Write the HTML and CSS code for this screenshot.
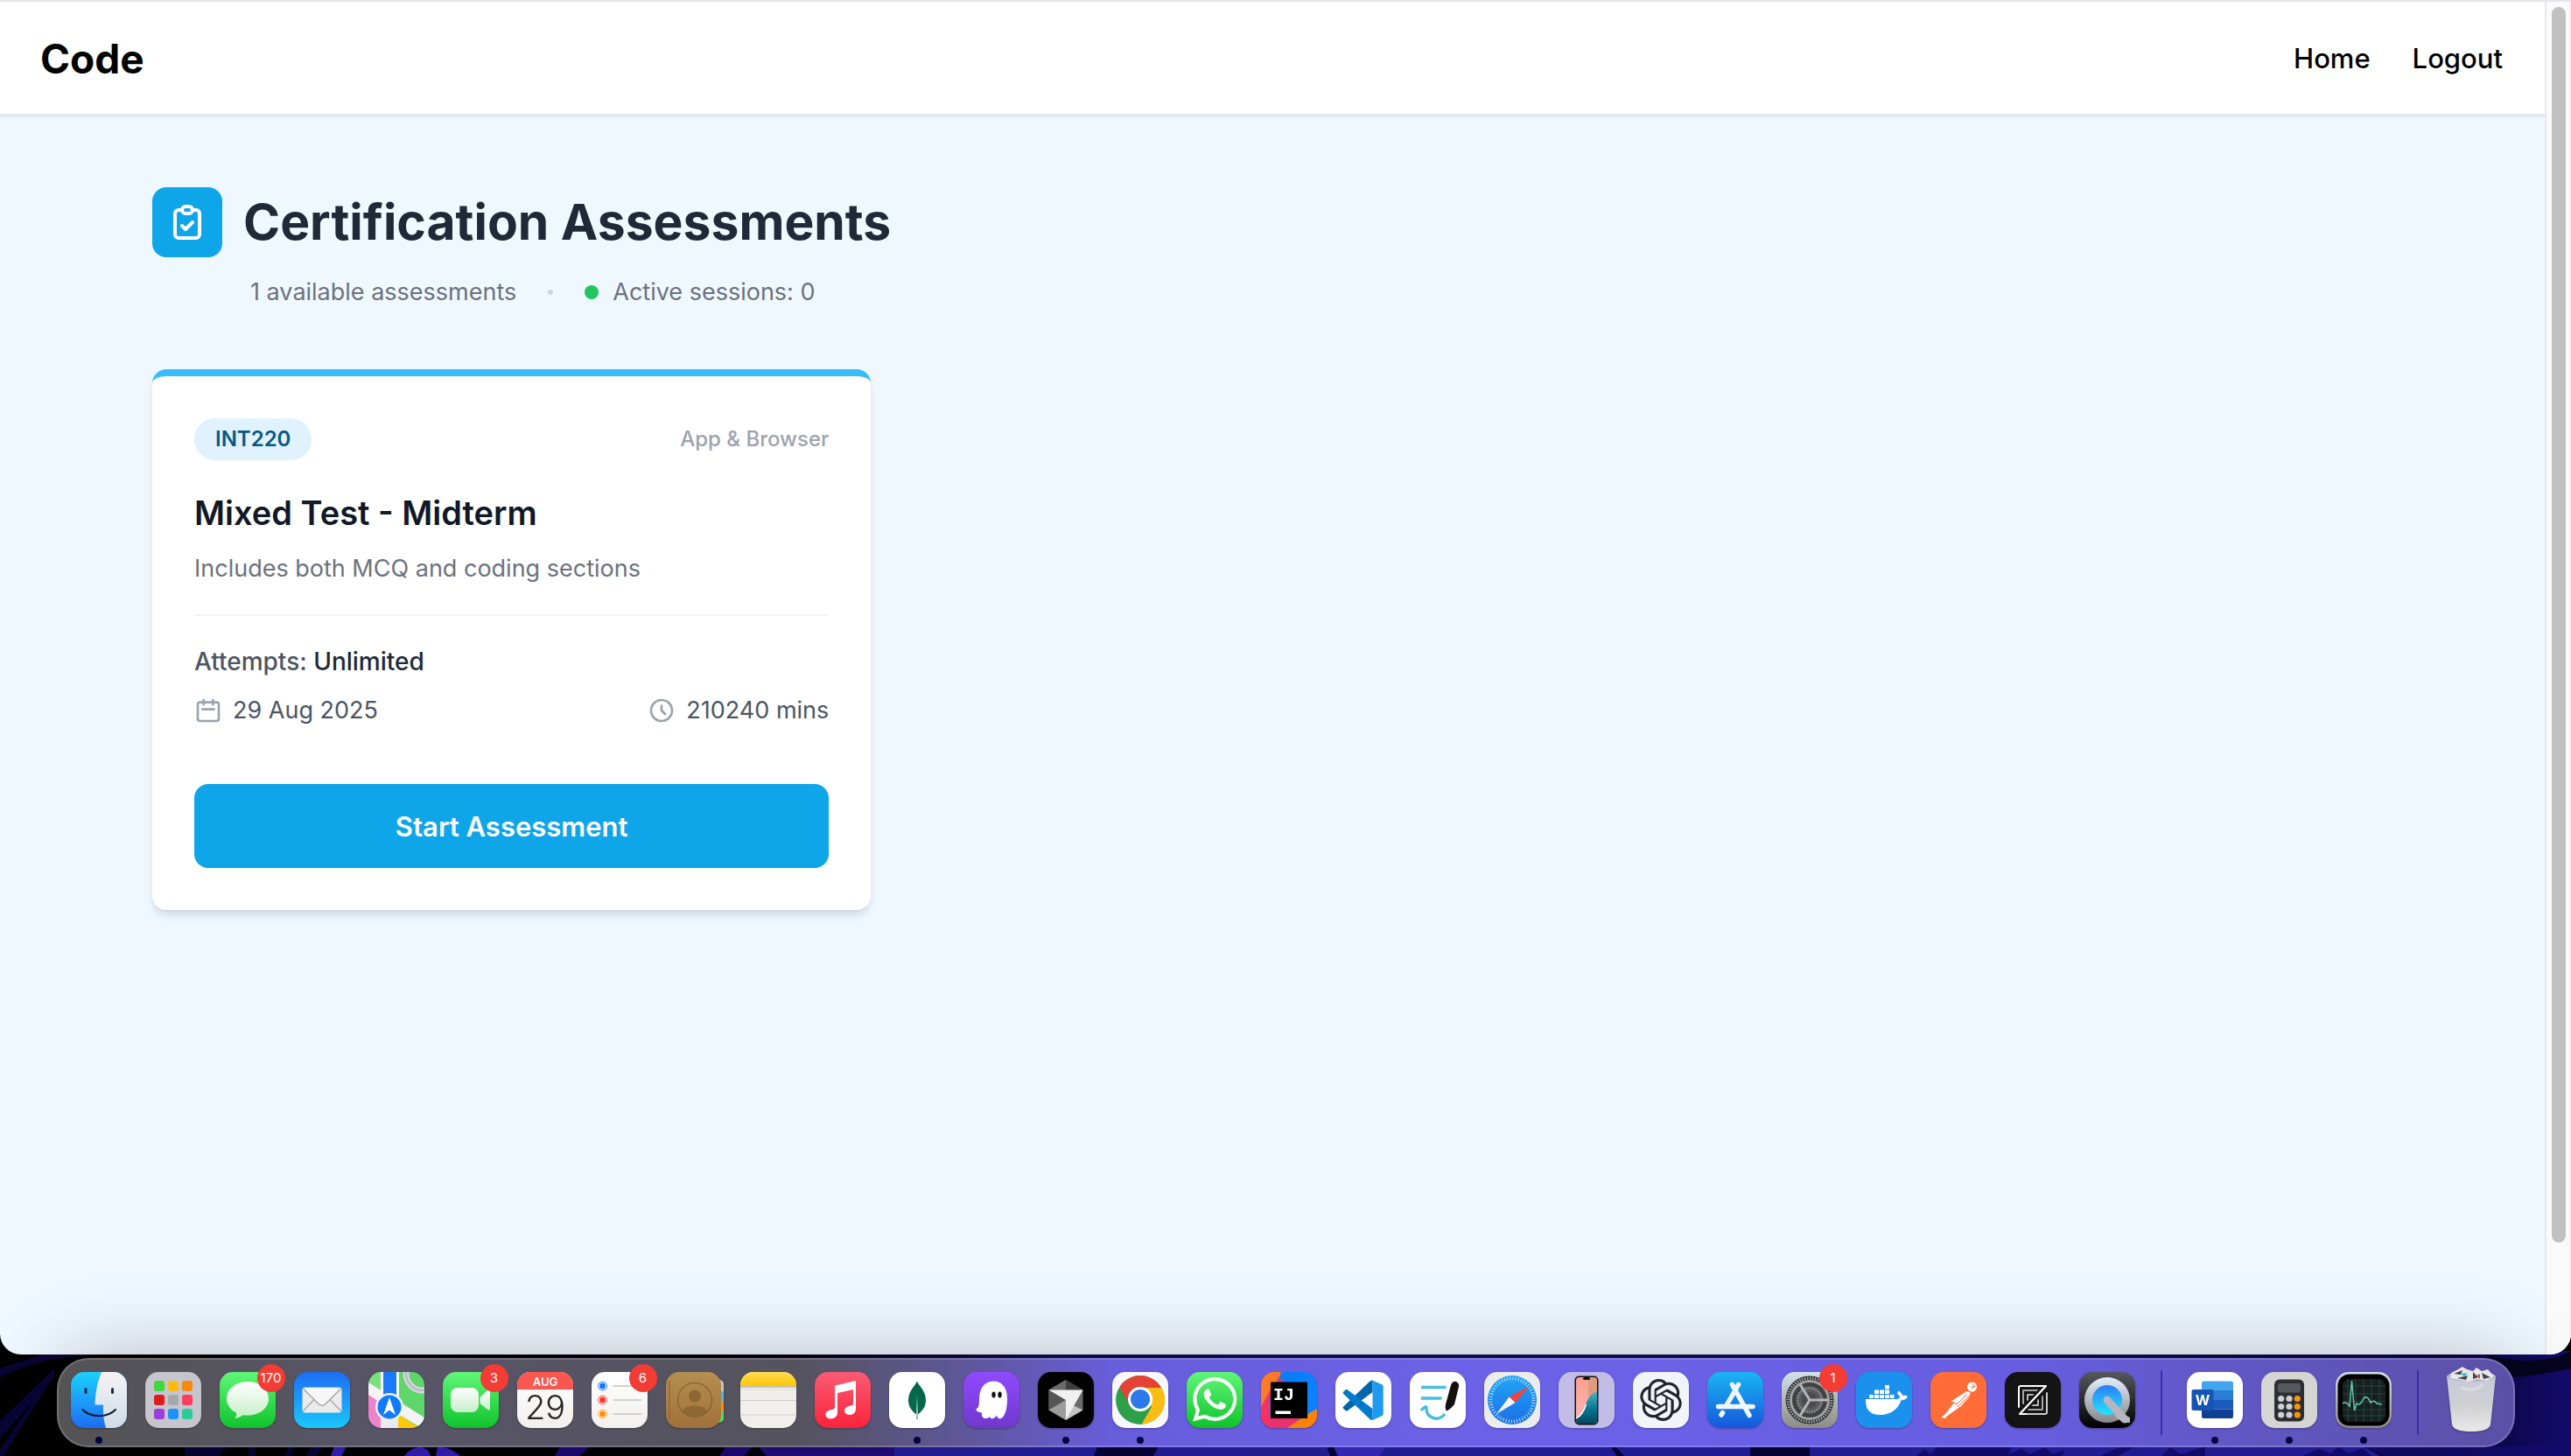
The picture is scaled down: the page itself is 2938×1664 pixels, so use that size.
FILE: index.html
```html
<!DOCTYPE html>
<html lang="en">
<head>
<meta charset="utf-8">
<title>Certification Assessments</title>
<link rel="stylesheet" href="styles.css">
</head>
<body>
<svg class="wallpaper" viewBox="0 0 2938 120" preserveAspectRatio="none" aria-hidden="true">
  <defs>
    <linearGradient id="wp" x1="0" x2="1" y1="0" y2="0">
      <stop offset="0" stop-color="#000"/><stop offset=".28" stop-color="#020008"/><stop offset=".4" stop-color="#100c4c"/><stop offset=".7" stop-color="#12104e"/><stop offset=".96" stop-color="#0c0744"/><stop offset="1" stop-color="#150b6e"/>
    </linearGradient>
  </defs>
  <rect width="2938" height="120" fill="url(#wp)"/>
  <path d="M0 30Q40 8 110 4H48L0 20ZM0 80L62 20V30L0 100ZM0 112L50 40H54L4 120H0Z" fill="#0b0536"/>
  <path d="M210 109H260L250 120H212ZM285 109H292V120H283ZM330 109H336L332 120H326ZM356 109H368L362 120H350Z" fill="#0a0538"/>
  <path d="M382 109H396L390 120H378ZM462 120Q470 109 482 110Q490 112 492 120ZM498 120L500 109Q514 110 526 120Z" fill="#3a1fc0"/>
  <path d="M640 109H674L662 120H634ZM830 109H860L850 120H822Z" fill="#200a78"/>
  <path d="M866 109H1300V120H876Z" fill="#220c80"/>
  <path d="M1022 109H2700L2720 120H1022Z" fill="#2720a6"/>
  <path d="M1254 109H1324L1318 120H1250ZM1516 109H1524L1528 120H1520ZM1840 109H1846L1856 120H1848ZM2000 109H2068V120H2000Z" fill="#08043c"/>
  <path d="M1524 109H1584L1576 120H1530Z" fill="#3c2cc8"/>
  <path d="M2190 120L2200 112L2206 118L2214 109H2300L2294 120ZM2290 120L2310 112L2320 118L2336 110L2346 118L2360 113L2356 120ZM2400 120L2424 109H2440L2420 120ZM2470 120L2480 110L2492 118L2520 109V120ZM2630 120L2650 112L2664 117L2672 109L2684 117L2700 111L2710 120Z" fill="#160c78"/>
  <path d="M2700 109H2938V120H2726Z" fill="#150b6e"/>
  <path d="M2840 4Q2900 20 2938 0V20Q2900 28 2872 30Z" fill="#07041f"/>
</svg>

<div class="window">
  <div class="page">
    <header class="topbar">
      <a class="brand" href="#">Code</a>
      <nav class="links">
        <a href="#">Home</a>
        <a href="#">Logout</a>
      </nav>
    </header>
    <main class="content">
      <div class="heading">
        <span class="heading-icon">
          <svg width="48" height="48" viewBox="0 0 24 24" fill="none" stroke="#fff" stroke-width="2" stroke-linecap="round" stroke-linejoin="round" aria-hidden="true"><path d="M9 5H7a2 2 0 00-2 2v12a2 2 0 002 2h10a2 2 0 002-2V7a2 2 0 00-2-2h-2M9 5a2 2 0 002 2h2a2 2 0 002-2M9 5a2 2 0 012-2h2a2 2 0 012 2m-6 9l2 2 4-4"/></svg>
        </span>
        <h1>Certification Assessments</h1>
      </div>
      <div class="summary">
        <span>1 available assessments</span>
        <span class="bullet"></span>
        <span class="sessions"><span class="status"></span>Active sessions: 0</span>
      </div>
      <div class="grid">
        <article class="card">
          <div class="card-top">
            <span class="code">INT220</span>
            <span class="platform">App &amp; Browser</span>
          </div>
          <h2>Mixed Test - Midterm</h2>
          <p class="desc">Includes both MCQ and coding sections</p>
          <div class="details">
            <p class="attempts">Attempts: <span>Unlimited</span></p>
            <div class="meta">
              <span class="meta-item">
                <svg width="32" height="32" viewBox="0 0 24 24" fill="none" stroke="#9ca3af" stroke-width="2" stroke-linecap="round" stroke-linejoin="round" aria-hidden="true"><path d="M8 7V3m8 4V3m-9 8h10M5 21h14a2 2 0 002-2V7a2 2 0 00-2-2H5a2 2 0 00-2 2v12a2 2 0 002 2z"/></svg>
                29 Aug 2025
              </span>
              <span class="meta-item">
                <svg width="32" height="32" viewBox="0 0 24 24" fill="none" stroke="#9ca3af" stroke-width="2" stroke-linecap="round" stroke-linejoin="round" aria-hidden="true"><path d="M12 8v4l3 3m6-3a9 9 0 11-18 0 9 9 0 0118 0z"/></svg>
                210240 mins
              </span>
            </div>
          </div>
          <button class="start" type="button">Start Assessment</button>
        </article>
      </div>
    </main>
  </div>
  <div class="scrollbar"><div class="thumb"></div></div>
</div>

<svg class="defs" width="0" height="0" aria-hidden="true">
  <defs>
    <linearGradient id="green" x2="0" y2="1"><stop stop-color="#5ff777"/><stop offset="1" stop-color="#0fc32c"/></linearGradient>
    <linearGradient id="white" x2="0" y2="1"><stop stop-color="#fff"/><stop offset="1" stop-color="#f1f0ec"/></linearGradient>
    <linearGradient id="soft" x2="0" y2="1"><stop stop-color="#fff"/><stop offset="1" stop-color="#c6eec9"/></linearGradient>
    <linearGradient id="finder" x2="0" y2="1"><stop stop-color="#1cd0fd"/><stop offset="1" stop-color="#1d6cf2"/></linearGradient>
    <linearGradient id="face" x2="0" y2="1"><stop stop-color="#f4f4f5"/><stop offset="1" stop-color="#cfdbe8"/></linearGradient>
    <linearGradient id="mail" x2="0" y2="1"><stop stop-color="#1d6df2"/><stop offset="1" stop-color="#1ac8fd"/></linearGradient>
    <linearGradient id="store" x2="0" y2="1"><stop stop-color="#19b5f3"/><stop offset="1" stop-color="#1558dc"/></linearGradient>
    <linearGradient id="music" x2="0" y2="1"><stop stop-color="#fb5b74"/><stop offset="1" stop-color="#fa233b"/></linearGradient>
    <linearGradient id="brown" x2="0" y2="1"><stop stop-color="#b58e50"/><stop offset="1" stop-color="#a1713c"/></linearGradient>
    <linearGradient id="yellow" x2="0" y2="1"><stop stop-color="#ffdc55"/><stop offset="1" stop-color="#ffc600"/></linearGradient>
    <linearGradient id="violet" x2="0" y2="1"><stop stop-color="#9049ff"/><stop offset="1" stop-color="#7038cc"/></linearGradient>
    <linearGradient id="compass" x2="0" y2="1"><stop stop-color="#1fa6f3"/><stop offset="1" stop-color="#1c6fe8"/></linearGradient>
    <linearGradient id="steel" x2="0" y2="1"><stop stop-color="#d2e2e9"/><stop offset="1" stop-color="#8d8b86"/></linearGradient>
    <linearGradient id="dark" x2="0" y2="1"><stop stop-color="#55585e"/><stop offset="1" stop-color="#000"/></linearGradient>
    <linearGradient id="silver" x2="0" y2="1"><stop stop-color="#e4edfa"/><stop offset="1" stop-color="#85868b"/></linearGradient>
    <linearGradient id="aqua" x2="0" y2="1"><stop stop-color="#2a7df5"/><stop offset="1" stop-color="#22e6ff"/></linearGradient>
    <linearGradient id="teal" x2="0" y2="1"><stop stop-color="#4fb6c4"/><stop offset=".5" stop-color="#087a96"/><stop offset="1" stop-color="#02435a"/></linearGradient>
    <linearGradient id="pink" x2="0" y2="1"><stop stop-color="#f9a18e"/><stop offset="1" stop-color="#ffb3b8"/></linearGradient>
    <linearGradient id="bin" x2="0" y2="1"><stop stop-color="#c9c8dc"/><stop offset=".5" stop-color="#cfcfd2"/><stop offset="1" stop-color="#e9e9ea"/></linearGradient>
    <linearGradient id="idea" x2="1" y2="1"><stop stop-color="#087cfa"/><stop offset="1" stop-color="#0a84ff"/></linearGradient>
    <clipPath id="tile"><rect width="64" height="64" rx="15"/></clipPath>
    <clipPath id="screen"><rect x="20" y="6" width="24" height="53" rx="4"/></clipPath>
    <clipPath id="ball"><circle cx="32" cy="32" r="28"/></clipPath>
  </defs>
</svg>

<nav class="dock" aria-label="Dock">
  <button class="app running" aria-label="Finder"><svg viewBox="0 0 64 64"><g clip-path="url(#tile)"><rect width="64" height="64" fill="url(#finder)"/><path d="M35 0C30 12 28 24 27.500 37.500H37C36.500 47 37.500 56 40 64H64V0Z" fill="url(#face)"/></g><path d="M17 19.500v4M47.500 19.500v4" stroke="#1b2a40" stroke-width="3" stroke-linecap="round"/><path d="M13.500 43C22 52.500 42 52.500 51 43" fill="none" stroke="#111c2c" stroke-width="2" stroke-linecap="round"/></svg></button>
  <button class="app" aria-label="Launchpad"><svg viewBox="0 0 64 64"><rect width="64" height="64" rx="15" fill="#c6c5ce"/><g><rect x="10" y="10" width="12" height="12" rx="3" fill="#3fd83c"/><rect x="26" y="10" width="12" height="12" rx="3" fill="#fdb913"/><rect x="42" y="10" width="12" height="12" rx="3" fill="#f58a12"/><rect x="10" y="26" width="12" height="12" rx="3" fill="#df1c1c"/><rect x="26" y="26" width="12" height="12" rx="3" fill="#a3a9ab"/><rect x="42" y="26" width="12" height="12" rx="3" fill="#fc3d5c"/><rect x="10" y="42" width="12" height="12" rx="3" fill="#9c3ddc"/><rect x="26" y="42" width="12" height="12" rx="3" fill="#1d92fa"/><rect x="42" y="42" width="12" height="12" rx="3" fill="#2cc99b"/></g></svg></button>
  <button class="app" aria-label="Messages"><svg viewBox="0 0 64 64"><rect width="64" height="64" rx="15" fill="url(#green)"/><path d="M32 11C18.500 11 8 19.500 8 30.500C8 37.500 12.500 43.500 19 46.500C20 49 18.500 51.500 17 53C21 53 24.500 51 26.500 49.300C44 51.500 56 42 56 30.500C56 19.500 45.500 11 32 11Z" fill="url(#soft)"/></svg><span class="badge">170</span></button>
  <button class="app" aria-label="Mail"><svg viewBox="0 0 64 64"><rect width="64" height="64" rx="15" fill="url(#mail)"/><rect x="9.500" y="17.500" width="45" height="29" rx="3" fill="#ebebec"/><path d="M10 45L23.500 31M54 45L40.500 31" stroke="#a5a7a9" stroke-width="1.300"/><path d="M10.500 19L28 36.500Q32 40 36 36.500L53.500 19" fill="#f7f7f8" stroke="#a0a2a4" stroke-width="1.300"/></svg></button>
  <button class="app" aria-label="Maps"><svg viewBox="0 0 64 64"><g clip-path="url(#tile)"><rect width="64" height="64" fill="#5fd66b"/><path d="M0 0H17V20H12L0 12Z" fill="#7ae07c"/><path d="M0 12L64 52V66L0 28Z" fill="#f3f3f5"/><path d="M0 26L15 36V64H0Z" fill="#ee82cb"/><path d="M14 32H34V64H14Z" fill="#e9e9ee"/><path d="M34 48L58 64H34Z" fill="#ffc907"/><rect x="14" width="21" height="34" fill="#fff"/><rect x="17" width="15" height="32" fill="#1a7bfa"/><circle cx="62" cy="2" r="19" fill="none" stroke="#d5d6dd" stroke-width="7"/><circle cx="62" cy="2" r="19" fill="none" stroke="#b3b6c2" stroke-width="2"/></g><circle cx="24" cy="40" r="16" fill="#eef2f8"/><circle cx="24" cy="40" r="13.500" fill="#0f7bfa"/><path d="M24 29L31 49L24 43.500L17 49Z" fill="#fff"/></svg></button>
  <button class="app" aria-label="FaceTime"><svg viewBox="0 0 64 64"><rect width="64" height="64" rx="15" fill="url(#green)"/><rect x="9" y="18" width="32" height="28" rx="8" fill="url(#soft)"/><path d="M42.500 29L50 22Q54 19 54 23V41Q54 46 50 42L42.500 36Z" fill="url(#soft)"/></svg><span class="badge">3</span></button>
  <button class="app" aria-label="Calendar"><svg viewBox="0 0 64 64"><g clip-path="url(#tile)"><rect width="64" height="64" fill="url(#white)"/><rect width="64" height="20" fill="#fb5750"/></g><text x="32" y="15.500" text-anchor="middle" font-family="Inter" font-weight="600" font-size="13" fill="#fff">AUG</text><text x="32" y="54" text-anchor="middle" font-family="Inter" font-weight="300" font-size="38" fill="#262626">29</text></svg></button>
  <button class="app" aria-label="Reminders"><svg viewBox="0 0 64 64"><rect width="64" height="64" rx="15" fill="url(#white)"/><path d="M24.500 16H57M24.500 32H57M24.500 48H57" stroke="#c2c3c8" stroke-width="1.500"/><g stroke="#fff" stroke-width="1.200"><circle cx="12.500" cy="16" r="6" fill="#1276f8"/><circle cx="12.500" cy="32" r="6" fill="#f9372d"/><circle cx="12.500" cy="48" r="6" fill="#f98f05"/><g fill="none"><circle cx="12.500" cy="16" r="4"/><circle cx="12.500" cy="32" r="4"/><circle cx="12.500" cy="48" r="4"/></g></g></svg><span class="badge">6</span></button>
  <button class="app" aria-label="Contacts"><svg viewBox="0 0 64 64"><path d="M58 8Q66 9 66 14V22H58Z" fill="#c5c5c2"/><path d="M58 22H66V34H58Z" fill="#4fb9e8"/><path d="M58 34H66V45H58Z" fill="#f99108"/><path d="M58 45H66V54Q65 58 58 58Z" fill="#53da5d"/><rect width="63" height="64" rx="15" fill="url(#brown)"/><path d="M4 10V54" stroke="#95693a" stroke-width="1.500"/><circle cx="33" cy="32" r="19.500" fill="none" stroke="#8d6633" stroke-width="1.500"/><circle cx="33" cy="27.500" r="7" fill="#8d6633"/><path d="M18.500 45Q22 38.500 33 38.500T47.500 45Q42 51.500 33 51.500T18.500 45Z" fill="#8d6633"/></svg></button>
  <button class="app" aria-label="Notes"><svg viewBox="0 0 64 64"><g clip-path="url(#tile)"><rect width="64" height="64" fill="#f0efeb"/><rect width="64" height="16" fill="url(#yellow)"/><path d="M0 17H64" stroke="#b9b5a8" stroke-width="1.500"/><path d="M2 20H64" stroke="#b5b3ad" stroke-dasharray="1 1.500"/><path d="M0 32.500H64M0 49H64" stroke="#cfcecb" stroke-width="1.200"/></g></svg></button>
  <button class="app" aria-label="Music"><svg viewBox="0 0 64 64"><rect width="64" height="64" rx="15" fill="url(#music)"/><path d="M23 15.500L47 10V42C47 46 44.500 49 40 49C36 49 34 46.500 34 44.500C34 41.500 36 39.500 40 38.800C43 38.300 44 38 44 35.500V20L26 24V46.500C26 50.500 22.500 53.500 18.500 53.500C14.500 53.500 12.500 51 12.500 48.800C12.500 45.500 15 44 18.500 43.200C22 42.500 23 42 23 39.500Z" fill="#fff"/></svg></button>
  <button class="app running" aria-label="MongoDB Compass"><svg viewBox="0 0 64 64"><rect width="64" height="64" rx="15" fill="#fff"/><path d="M32 10.500C34 16 42 21 42 32.500C42 40.500 37 45 33 48.500L32.700 54H31.300L31 48.500C27 45 22 40.500 22 32.500C22 21 30 16 32 10.500Z" fill="#05684a"/><path d="M32 26L33 48.500L32.500 54H31.500L31 48.500Z" fill="#b9cfc4"/></svg></button>
  <button class="app" aria-label="Phantom"><svg viewBox="0 0 64 64"><rect width="64" height="64" rx="15" fill="url(#violet)"/><path d="M34 10.500C44 10.500 50 18 50 30C50 38 49 46 46 50C43 55 39 54 37.500 49.500C36 54 31 54.500 30 51C27 54.500 20 54 21 46.500C18 46 14 45 14.500 42C17.500 41.500 18 37 18 31C18 19 24 10.500 34 10.500Z" fill="#fff"/><ellipse cx="34.500" cy="26" rx="2.200" ry="3.600" fill="#111"/><ellipse cx="41.500" cy="26" rx="2.200" ry="3.600" fill="#111"/></svg></button>
  <button class="app running" aria-label="Cursor"><svg viewBox="0 0 64 64"><rect width="64" height="64" rx="15" fill="#020202"/><path d="M32 9L51.500 20.500V43.500L32 55L12.500 43.500V20.500Z" fill="#6a6a6a"/><path d="M32 9L12.500 20.500H32Z" fill="#6b6b6b"/><path d="M32 9L51.500 20.500H32Z" fill="#3d3d3d"/><path d="M12.500 20.500L32 32L12.500 43.500Z" fill="#555"/><path d="M12.500 43.500L32 32V55Z" fill="#9d9d9d"/><path d="M51.500 43.500L32 55L40 38Z" fill="#c4c4c4"/><path d="M12.500 20.500H51.500L32 55V32Z" fill="#f0f0f0"/></svg></button>
  <button class="app running" aria-label="Chrome"><svg viewBox="0 0 64 64"><rect width="64" height="64" rx="15" fill="#f8f8ff"/><g clip-path="url(#ball)"><rect width="64" height="64" fill="#2c9f49"/><path d="M32 18H64V64H31L45 40Z" fill="#fcbd12"/><path d="M7 15V0H64V18H32L20 38Z" fill="#e54236"/></g><circle cx="32" cy="31" r="14" fill="#fff"/><circle cx="32" cy="31" r="11" fill="#2b78ea"/></svg></button>
  <button class="app" aria-label="WhatsApp"><svg viewBox="0 0 64 64"><rect width="64" height="64" rx="15" fill="url(#green)"/><path transform="translate(7 6) scale(2.100)" fill="#f5f8f5" d="M17.472 14.382c-.297-.149-1.758-.867-2.030-.967-.273-.099-.471-.148-.67.15-.197.297-.767.966-.94 1.164-.173.199-.347.223-.644.075-.297-.15-1.255-.463-2.390-1.475-.883-.788-1.480-1.761-1.653-2.059-.173-.297-.018-.458.13-.606.134-.133.298-.347.446-.52.149-.174.198-.298.298-.497.099-.198.05-.371-.025-.52-.075-.149-.669-1.612-.916-2.207-.242-.579-.487-.5-.669-.51-.173-.008-.371-.01-.57-.01-.198 0-.52.074-.792.372-.272.297-1.040 1.016-1.040 2.479 0 1.462 1.065 2.875 1.213 3.074.149.198 2.096 3.200 5.077 4.487.709.306 1.262.489 1.694.625.712.227 1.360.195 1.871.118.571-.085 1.758-.719 2.006-1.413.248-.694.248-1.289.173-1.413-.074-.124-.272-.198-.57-.347m-5.421 7.403h-.004a9.870 9.870 0 01-5.031-1.378l-.361-.214-3.741.982.998-3.648-.235-.374a9.860 9.860 0 01-1.510-5.260c.001-5.450 4.436-9.884 9.888-9.884 2.640 0 5.122 1.030 6.988 2.898a9.825 9.825 0 012.893 6.994c-.003 5.450-4.437 9.884-9.885 9.884m8.413-18.297A11.815 11.815 0 0012.050 0C5.495 0 .16 5.335.157 11.892c0 2.096.547 4.142 1.588 5.945L.057 24l6.305-1.654a11.882 11.882 0 005.683 1.448h.005c6.554 0 11.890-5.335 11.893-11.893a11.821 11.821 0 00-3.480-8.413Z"/></svg></button>
  <button class="app" aria-label="IntelliJ IDEA"><svg viewBox="0 0 64 64"><g clip-path="url(#tile)"><rect width="64" height="64" fill="#fe2857"/><path d="M0 0H23L10 38L0 42Z" fill="#fc7a28"/><path d="M0 40L12 18V64H0Z" fill="#fb3060"/><path d="M23 0H64V48L40 64H30L12 40Z" fill="url(#idea)"/><path d="M20 6L40 20L30 64H8V30Z" fill="#b14a90"/><path d="M8 50H46L36 64H6Z" fill="#e8316d"/><path d="M64 42V64H30L50 50Z" fill="#fe8205"/></g><rect x="11" y="11.500" width="42" height="41.500" fill="#000"/><text x="14" y="31.500" font-family="Liberation Mono" font-weight="700" font-size="20" fill="#fff">IJ</text><rect x="16.500" y="44.500" width="17.500" height="3.500" fill="#fff"/></svg></button>
  <button class="app" aria-label="Visual Studio Code"><svg viewBox="0 0 64 64"><rect width="64" height="64" rx="15" fill="#fff"/><path d="M13.500 44.500Q12.500 45 11.500 44L9.200 42Q8 40.800 9.200 39.500L39 11Q40.500 9.500 42.500 9.500V23Z" fill="#0065a9"/><path d="M13.500 20Q12.500 19.500 11.500 20.500L9.200 22.500Q8 23.700 9.200 25L39 53.500Q40.500 55 42.500 55V42Z" fill="#007acc"/><path d="M42.500 9.500L53 14.300Q54.700 15 54.700 17V47.500Q54.700 49.500 53 50.200L42.500 55Q41 55.300 39.500 54C41.500 55 42.500 53.500 42.500 52V12.500C42.500 11 41.500 9.500 39.500 10.500Q41 9 42.500 9.500Z" fill="#209af0"/></svg></button>
  <button class="app" aria-label="Notes Writer"><svg viewBox="0 0 64 64"><rect width="64" height="64" rx="15" fill="#fff"/><path d="M13 17.500H41.500M13 30H36.500" stroke="#45bfdd" stroke-width="3.500"/><path d="M13 44C16 40 19.500 38 19 42C18.500 52 33 58 40 48" fill="none" stroke="#45bfdd" stroke-width="3.500"/><path d="M47 15Q49 10 53 11Q57 13 56 17L51 37Q46 43 42 44.500Q40 42 41 37Z" fill="#15100f"/></svg></button>
  <button class="app" aria-label="Safari"><svg viewBox="0 0 64 64"><rect width="64" height="64" rx="15" fill="#ececee"/><circle cx="32" cy="32" r="28" fill="url(#compass)"/><circle cx="32" cy="32" r="24.500" fill="none" stroke="#b9defa" stroke-width="4" stroke-dasharray="1 2.200"/><path d="M51.500 16L35.500 35L28.500 28.500Z" fill="#f9413c"/><path d="M14 48L35.500 35L28.500 28.500Z" fill="#f4f5f7"/></svg></button>
  <button class="app" aria-label="iPhone Mirroring"><svg viewBox="0 0 64 64"><rect width="64" height="64" rx="15" fill="#c2bde6"/><rect x="18.500" y="4.500" width="27" height="56" rx="5" fill="#101216"/><g clip-path="url(#screen)"><rect x="20" y="6" width="24" height="53" fill="url(#pink)"/><path d="M44 6V24Q36 28 34 34V6Z" fill="#dd9c80"/><path d="M44 22Q34 26 31 38Q28 50 20 53V60H44Z" fill="url(#teal)"/><path d="M31.500 37Q28 49 20 53" fill="none" stroke="#fff" stroke-width="1.500"/></g><rect x="28" y="6" width="8" height="3" rx="1.500" fill="#101216"/></svg></button>
  <button class="app" aria-label="ChatGPT"><svg viewBox="0 0 64 64"><rect width="64" height="64" rx="15" fill="#f1f4f9"/><path transform="translate(8 8) scale(2)" fill="#20242b" d="M22.282 9.821a5.985 5.985 0 0 0-.516-4.911 6.046 6.046 0 0 0-6.510-2.900A6.065 6.065 0 0 0 4.981 4.182a5.985 5.985 0 0 0-3.998 2.900 6.046 6.046 0 0 0 .743 7.097 5.980 5.980 0 0 0 .511 4.911 6.051 6.051 0 0 0 6.515 2.900A5.985 5.985 0 0 0 13.260 24a6.056 6.056 0 0 0 5.772-4.206 5.989 5.989 0 0 0 3.998-2.900 6.056 6.056 0 0 0-.748-7.073zm-9.022 12.608a4.476 4.476 0 0 1-2.876-1.041l.142-.080 4.778-2.758a.795.795 0 0 0 .393-.681v-6.737l2.020 1.169a.071.071 0 0 1 .038.052v5.583a4.504 4.504 0 0 1-4.495 4.494zm-9.661-4.125a4.471 4.471 0 0 1-.535-3.014l.142.085 4.783 2.758a.771.771 0 0 0 .781 0l5.843-3.369v2.332a.080.080 0 0 1-.033.062L9.740 19.950a4.499 4.499 0 0 1-6.141-1.646zM2.341 7.896a4.485 4.485 0 0 1 2.366-1.973V11.600a.766.766 0 0 0 .388.677l5.814 3.354-2.020 1.169a.076.076 0 0 1-.071 0l-4.830-2.787A4.504 4.504 0 0 1 2.341 7.872zm16.596 3.856L13.104 8.364 15.119 7.200a.076.076 0 0 1 .071 0l4.830 2.791a4.494 4.494 0 0 1-.677 8.104v-5.677a.790.790 0 0 0-.407-.667zm2.011-3.023l-.142-.085-4.774-2.782a.776.776 0 0 0-.785 0L9.409 9.230V6.897a.066.066 0 0 1 .028-.062l4.830-2.787a4.499 4.499 0 0 1 6.680 4.660zM8.307 12.863l-2.020-1.164a.080.080 0 0 1-.038-.057V6.074a4.499 4.499 0 0 1 7.376-3.454l-.142.081L8.704 5.459a.795.795 0 0 0-.393.681zm1.098-2.365l2.602-1.500 2.607 1.500v2.999l-2.597 1.500-2.607-1.500Z"/></svg></button>
  <button class="app" aria-label="App Store"><svg viewBox="0 0 64 64"><rect width="64" height="64" rx="15" fill="url(#store)"/><g stroke="#eef6ff" stroke-width="5.500" stroke-linecap="round"><path d="M12.500 39.500H52"/><path d="M35.500 14.500L22 38"/><path d="M28.500 14.500L48 49.500"/><path d="M17.500 46.500L16 49"/></g></svg></button>
  <button class="app" aria-label="System Settings"><svg viewBox="0 0 64 64"><rect width="64" height="64" rx="15" fill="url(#steel)"/><circle cx="32" cy="32" r="27.500" fill="#2c2c2e"/><circle cx="32" cy="32" r="25" fill="none" stroke="#a9abad" stroke-width="3" stroke-dasharray="1.500 1.500"/><circle cx="32" cy="32" r="21.500" fill="#404143" stroke="#a2a3a5" stroke-width="3"/><circle cx="32" cy="32" r="14" fill="#5b5b5c" stroke="#858688" stroke-width="3" stroke-dasharray="2 1"/><circle cx="32" cy="32" r="9" fill="#4b4b4c"/><path d="M32 32H53M32 32L21 14M32 32L21 50" stroke="#b5b6b8" stroke-width="3"/></svg><span class="badge">1</span></button>
  <button class="app" aria-label="Docker"><svg viewBox="0 0 64 64"><rect width="64" height="64" rx="15" fill="#1c90ed"/><path d="M11 31H46C49 31 50 29.500 50 27.500C46.500 25 46.500 23.500 49 21.500C51.500 23.500 52.500 25 53 27C55.500 26.300 57.500 26.800 59 28C57.500 31 55 32.300 51.500 32.300C48 43 39 49 28 49C16 49 10.500 43 11 31Z" fill="#fff"/><path d="M15 26h5v4h-5zM21 26h5v4h-5zM27 26h5v4h-5zM33 26h5v4h-5zM39 26h4.500v4H39zM21 20.500h5v4.500h-5zM27 20.500h5v4.500h-5zM33 20.500h5v4.500h-5zM33 15h5v4.500h-5z" fill="#fff"/></svg></button>
  <button class="app" aria-label="Postman"><svg viewBox="0 0 64 64"><rect width="64" height="64" rx="15" fill="#ff6c37"/><circle cx="47.500" cy="17" r="5.500" fill="#fff"/><path d="M47 12.500L51 16L47 19M47 17h4" fill="none" stroke="#ff6c37" stroke-width="1"/><path d="M41.500 22L45.500 23.500L44.500 28L35 39L18 51L17.500 53L12 52L17 48L27 35L23 34L29 30Z" fill="#fff"/><path d="M42 25L29 38M44 27L31 40M24 34L30 36" stroke="#ff6c37" stroke-width="1"/></svg></button>
  <button class="app" aria-label="Zed"><svg viewBox="0 0 64 64"><rect width="64" height="64" rx="15" fill="#141414"/><g fill="none" stroke-width="2" stroke-linejoin="round" stroke-linecap="round"><path d="M16 40V18Q16 16 18 16H47" stroke="#fff"/><path d="M17 48H46Q48 48 48 46V24" stroke="#ccc"/><path d="M21 36V21H38M43 28V43H26" stroke="#a4a4a4"/><path d="M26 32V26H34M38 32V38H31" stroke="#b8b8b8"/><path d="M47 16L17 48" stroke="#141414" stroke-width="7"/><path d="M40 16H47L17 48H24" stroke="#fff" stroke-width="2.200"/></g></svg></button>
  <button class="app" aria-label="QuickTime Player"><svg viewBox="0 0 64 64"><rect width="64" height="64" rx="15" fill="url(#dark)"/><circle cx="32" cy="32" r="26" fill="url(#silver)"/><path d="M32 32L46 46L58 52V58H51L42 52Z" fill="#aeafb4"/><circle cx="32" cy="32" r="17" fill="url(#aqua)"/><path d="M32 32L52 54" stroke="#b4b7bf" stroke-width="9" stroke-linecap="round"/></svg></button>
  <span class="divider"></span>
  <button class="app running" aria-label="Word"><svg viewBox="0 0 64 64"><rect width="64" height="64" rx="15" fill="#fff"/><path d="M17 21V13Q17 10.500 19 10.500H51Q53 10.500 53 12.500V21Z" fill="#41a5ee"/><path d="M17 21H53V32H17Z" fill="#2b7cd3"/><path d="M17 32H53V42.500H17Z" fill="#185abd"/><path d="M17 42.500H53V51Q53 53 51 53H19Q17 53 17 51Z" fill="#103f91"/><rect x="5.500" y="20" width="25" height="24" rx="2" fill="#1654b5"/><text x="18" y="38" text-anchor="middle" font-family="Inter" font-weight="700" font-size="16" fill="#fff">W</text></svg></button>
  <button class="app running" aria-label="Calculator"><svg viewBox="0 0 64 64"><rect width="64" height="64" rx="15" fill="#d5d5d3"/><rect x="15" y="8.500" width="34" height="48" rx="6" fill="#2c2e33"/><rect x="19" y="13" width="26" height="10.500" rx="3" fill="#55585c"/><g fill="#cfd0d2"><circle cx="22.700" cy="30.500" r="3.600"/><circle cx="32" cy="30.500" r="3.600"/><circle cx="22.700" cy="39.500" r="3.600"/><circle cx="32" cy="39.500" r="3.600"/><circle cx="22.700" cy="49" r="3.600"/><circle cx="32" cy="49" r="3.600"/></g><g fill="#fb9608"><circle cx="41.300" cy="30.500" r="3.600"/><circle cx="41.300" cy="39.500" r="3.600"/><circle cx="41.300" cy="49" r="3.600"/></g></svg></button>
  <button class="app running" aria-label="Activity Monitor"><svg viewBox="0 0 64 64"><rect width="64" height="64" rx="15" fill="url(#steel)"/><rect x="2.500" y="2.500" width="59" height="59" rx="13" fill="#000"/><rect x="8" y="8" width="49" height="49" rx="8" fill="#16211f"/><path d="M14 8V57M23 8V57M32 8V57M41 8V57M50 8V57M8 16H57M8 25H57M8 34H57M8 43H57M8 50H57" stroke="#29443e" stroke-width="1"/><path d="M8 36Q12 33 16 39L18.500 10L21.500 44L24 36Q28 39 31 32Q35 24 40 35Q44 31 47 36L53 37" fill="none" stroke="#63c8b0" stroke-width="1.500"/></svg></button>
  <span class="divider"></span>
  <button class="app" aria-label="Trash"><svg viewBox="0 0 64 64"><path d="M4 5L60 5L54 60Q52 68 32 68Q12 68 10 60Z" fill="url(#bin)"/><ellipse cx="32" cy="5" rx="28" ry="6" fill="#b5b4c4"/><path d="M9 1L17-3L22-6L27-3L34-1L38-5L44-1L51-3L58 5L50 10L38 8L30 11L18 9L8 7Z" fill="#e8e8ea"/><path d="M12 2L22-2L20 3ZM16 7L28 4L26 9ZM34 0L40 6L34 8ZM44 1L54 6L46 8Z" fill="#46434a"/><path d="M20 2L28 1L24 5Z" fill="#2ab5ce"/><path d="M38 4L42 2L42 8Z" fill="#c7582e"/><path d="M20 18Q34 24 46 14" fill="none" stroke="#dcdce0" stroke-width="3"/></svg></button>
</nav>
</body>
</html>
```

FILE: styles.css
```css
* {
  box-sizing: border-box;
}

body {
  margin: 0;
  min-height: 100vh;
  padding-bottom: 10px;
  display: flex;
  flex-direction: column;
  gap: 4px;
  background: #000;
  font-family: Inter, "Liberation Sans", sans-serif;
}

h1,
h2,
p {
  margin: 0;
}

a {
  color: inherit;
  text-decoration: none;
}

.wallpaper {
  position: absolute;
  left: 0;
  bottom: 0;
  width: 100%;
  height: 120px;
}

.defs {
  position: absolute;
}

/* Browser window */
.window {
  position: relative;
  flex: 1;
  display: flex;
  overflow: hidden;
  border-top: 2px solid #e8e2ea;
  border-radius: 0 0 24px 24px;
  background: #f0f8ff;
}

.page {
  flex: 1;
}

.scrollbar {
  width: 30px;
  padding: 6px 4px 128px 6px;
  border-left: 2px solid #e8e8e8;
  border-right: 2px solid #ededed;
  background: #fafafa;
}

.thumb {
  width: 16px;
  height: 100%;
  border-radius: 8px;
  background: #c1c1c1;
}

.topbar {
  display: flex;
  align-items: center;
  justify-content: space-between;
  height: 132px;
  padding: 2px 48px 0 46px;
  border-bottom: 4px solid #e2e8f0;
  background: #fff;
  color: #000;
}

.brand {
  font-size: 46px;
  font-weight: 700;
  line-height: 64px;
}

.links {
  display: flex;
  gap: 48px;
  font-size: 31px;
  font-weight: 500;
  line-height: 48px;
}

.content {
  max-width: 2560px;
  margin: 0 auto;
  padding: 80px 0;
}

.heading {
  display: flex;
  align-items: center;
  gap: 24px;
}

.heading-icon {
  display: flex;
  padding: 16px;
  border-radius: 16px;
  background: #0ea5e9;
}

.heading h1 {
  color: #1f2937;
  font-size: 57px;
  font-weight: 700;
  line-height: 72px;
}

.summary {
  display: flex;
  align-items: center;
  gap: 36px;
  margin: 20px 0 68px 112px;
  color: #6b7280;
  font-size: 27px;
  line-height: 40px;
}

.bullet {
  width: 6px;
  height: 6px;
  border-radius: 50%;
  background: #d1d5db;
}

.sessions {
  display: flex;
  align-items: center;
  gap: 16px;
}

.status {
  width: 16px;
  height: 16px;
  border-radius: 50%;
  background: #22c55e;
}

.grid {
  display: grid;
  grid-template-columns: repeat(3, 1fr);
  gap: 48px;
}

.card {
  padding: 48px;
  border-top: 8px solid #38bdf8;
  border-radius: 16px;
  background: #fff;
  box-shadow: 0 8px 12px -2px rgba(0, 0, 0, 0.1), 0 4px 8px -4px rgba(0, 0, 0, 0.1);
}

.card-top {
  display: flex;
  align-items: center;
  justify-content: space-between;
  margin-bottom: 32px;
  font-size: 24px;
  line-height: 32px;
}

.code {
  padding: 8px 24px;
  border-radius: 24px;
  background: #e0f2fe;
  color: #075985;
  font-weight: 600;
}

.platform {
  color: #9ca3af;
  font-weight: 500;
}

.card h2 {
  color: #111827;
  font-size: 38px;
  font-weight: 600;
  line-height: 56px;
}

.desc {
  margin: 16px 0 32px;
  color: #6b7280;
  font-size: 27px;
  line-height: 40px;
}

.details {
  display: flex;
  flex-direction: column;
  gap: 16px;
  padding-top: 32px;
  border-top: 2px solid #f3f4f6;
  color: #4b5563;
  font-size: 27px;
  line-height: 40px;
}

.attempts {
  font-size: 28px;
  font-weight: 500;
}

.attempts span {
  color: #1f2937;
}

.meta {
  display: flex;
  justify-content: space-between;
}

.meta-item {
  display: flex;
  align-items: center;
  gap: 12px;
}

.start {
  width: 100%;
  height: 96px;
  margin-top: 64px;
  border: 0;
  border-radius: 16px;
  background: #0ea5e9;
  color: #fff;
  font-family: inherit;
  font-size: 31px;
  font-weight: 600;
}

/* Dock */
.dock {
  position: relative;
  display: flex;
  align-items: center;
  gap: 21px;
  margin: 0 auto;
  padding: 14px 16px 20px 14px;
  border: 2px solid rgba(255, 255, 255, 0.18);
  border-radius: 36px;
  background: linear-gradient(90deg, #545355 0%, #575567 14%, #55535d 30%, #5f569a 37%, #685ddb 43%, #6b62e8 60%, #675de0 80%, #6156c0 90%, #5b50a6 100%) border-box;
  box-shadow: 0 0 90px rgba(0, 0, 0, 0.26);
}

.app {
  position: relative;
  width: 64px;
  height: 64px;
  padding: 0;
  border: 0;
  background: none;
}

.app svg {
  display: block;
  width: 64px;
  height: 64px;
  overflow: visible;
  filter: drop-shadow(0 1px 1px rgba(0, 0, 0, 0.3));
}

.running::after {
  content: "";
  position: absolute;
  left: 28px;
  bottom: -18px;
  width: 8px;
  height: 8px;
  border-radius: 50%;
  background: #030042;
}

.badge {
  position: absolute;
  top: -9px;
  right: -11px;
  min-width: 32px;
  height: 32px;
  padding: 0 4px;
  border-radius: 16px;
  background: #f23c34;
  color: #fff;
  font-family: Inter, "Liberation Sans", sans-serif;
  font-size: 15px;
  line-height: 32px;
  text-align: center;
}

.divider {
  width: 2px;
  height: 74px;
  margin: -2px 7px -8px 8px;
  background: #3a2ea8;
}
```
